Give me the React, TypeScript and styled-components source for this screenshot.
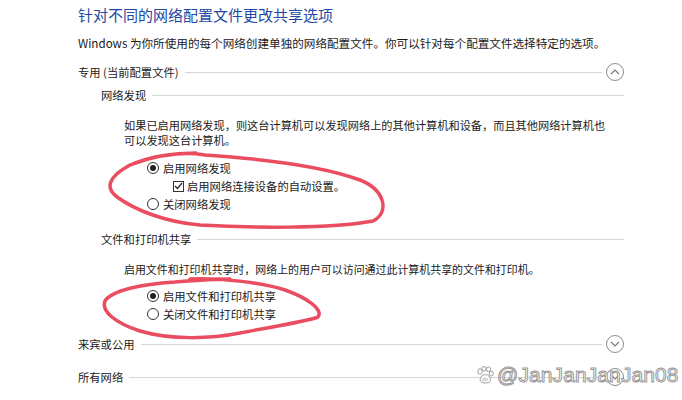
import styled, { createGlobalStyle } from 'styled-components';

const GlobalStyle = createGlobalStyle`
  html, body {
    margin: 0;
    padding: 0;
    background: #ffffff;
  }
  body {
    font-family: "Noto Sans CJK SC", "Noto Sans", sans-serif;
    color: #1a1a1a;
  }
`;

const Page = styled.div`
  position: relative;
  width: 682px;
  height: 400px;
  overflow: hidden;
  box-sizing: border-box;
  padding: 5px 0 0 78px;
`;

const Content = styled.div`
  width: 546px;
  display: flex;
  flex-direction: column;
`;

const Title = styled.h1`
  margin: 0;
  font-size: 15px;
  font-weight: normal;
  line-height: 20px;
  color: #2347a3;
`;

const Subtitle = styled.p`
  margin: 10px 0 0;
  font-size: 11.6px;
  line-height: 16px;
`;

const HeaderRow = styled.div<{ $top: number; $indent?: number }>`
  display: flex;
  align-items: center;
  height: ${(p) => (p.$indent ? 16 : 20)}px;
  margin-top: ${(p) => p.$top}px;
  margin-left: ${(p) => p.$indent ?? 0}px;
  font-size: 11.3px;
  white-space: nowrap;
`;

const Rule = styled.span<{ $gap?: number }>`
  flex: 1;
  height: 1px;
  margin-left: 6px;
  margin-right: ${(p) => p.$gap ?? 0}px;
  background: #d6d6d6;
`;

const ChevronButton = styled.button`
  width: 18px;
  height: 18px;
  padding: 0;
  border: 1px solid #8c8c8c;
  border-radius: 50%;
  background: #ffffff;
  display: flex;
  align-items: center;
  justify-content: center;
  box-sizing: border-box;
`;

const Paragraph = styled.p<{ $top: number; $size?: number }>`
  margin: ${(p) => p.$top}px 0 0 46px;
  width: 492px;
  font-size: ${(p) => p.$size ?? 11.2}px;
  line-height: 15px;
`;

const Options = styled.div<{ $top: number }>`
  display: flex;
  flex-direction: column;
  margin: ${(p) => p.$top}px 0 0 69px;
`;

const OptionRow = styled.label<{ $indent?: number }>`
  display: flex;
  align-items: center;
  height: 18px;
  margin-left: ${(p) => p.$indent ?? 0}px;
  font-size: 11.3px;
  gap: 4px;
`;

const Radio = styled.span<{ $on?: boolean }>`
  width: 12px;
  height: 12px;
  border: 1px solid #333333;
  border-radius: 50%;
  box-sizing: border-box;
  display: flex;
  align-items: center;
  justify-content: center;
  background: #ffffff;

  &::after {
    content: '';
    width: 6px;
    height: 6px;
    border-radius: 50%;
    background: ${(p) => (p.$on ? '#222222' : 'transparent')};
  }
`;

const Check = styled.span`
  width: 11px;
  height: 11px;
  border: 1px solid #333333;
  box-sizing: border-box;
  display: flex;
  align-items: center;
  justify-content: center;
  margin-right: -1px;
`;

const Annotations = styled.svg`
  position: absolute;
  left: 0;
  top: 0;
  pointer-events: none;
`;

const Watermark = styled.div`
  position: absolute;
  left: 476px;
  top: 363px;
  display: flex;
  align-items: center;
  gap: 3px;
  font-family: "Liberation Sans", Arial, sans-serif;
  font-size: 21px;
  color: #ffffff;
  -webkit-text-stroke: 1px #9a9a9a;
  letter-spacing: 0.1px;
`;

const Chevron = ({ up }: { up?: boolean }) => (
  <ChevronButton>
    <svg width="10" height="6" viewBox="0 0 10 6">
      <polyline
        points={up ? '1,5 5,1 9,5' : '1,1 5,5 9,1'}
        fill="none"
        stroke="#7a7a7a"
        strokeWidth="1.2"
      />
    </svg>
  </ChevronButton>
);

const Paw = () => (
  <svg width="18" height="19" viewBox="0 0 18 19">
    <g fill="#ffffff" stroke="#9a9a9a" strokeWidth="1">
      <ellipse cx="4" cy="5.5" rx="2.2" ry="2.8" />
      <ellipse cx="8" cy="2.8" rx="2.1" ry="2.3" />
      <ellipse cx="12.5" cy="3.3" rx="2.1" ry="2.4" />
      <ellipse cx="15.2" cy="7.6" rx="2" ry="2.4" />
      <path d="M4.5 15 C 3 13, 6 8.5, 9.5 8.5 C 13 8.5, 15.5 13, 14 15.5 C 12.5 17.5, 6.5 17.5, 4.5 15 Z" />
    </g>
    <text x="6.2" y="15.2" fontSize="5" fill="#9a9a9a" stroke="none" fontFamily="Liberation Sans, sans-serif">du</text>
  </svg>
);

const App = () => {
  return (
    <Page>
      <GlobalStyle />
      <Content>
        <Title>针对不同的网络配置文件更改共享选项</Title>
        <Subtitle>Windows 为你所使用的每个网络创建单独的网络配置文件。你可以针对每个配置文件选择特定的选项。</Subtitle>

        <HeaderRow $top={11}>
          专用 (当前配置文件)
          <Rule $gap={4} />
          <Chevron up />
        </HeaderRow>

        <HeaderRow $top={5} $indent={23}>
          网络发现
          <Rule />
        </HeaderRow>
        <Paragraph $top={15}>
          如果已启用网络发现，则这台计算机可以发现网络上的其他计算机和设备，而且其他网络计算机也可以发现这台计算机。
        </Paragraph>
        <Options $top={11}>
          <OptionRow>
            <Radio $on />
            启用网络发现
          </OptionRow>
          <OptionRow $indent={26}>
            <Check>
              <svg width="9" height="8" viewBox="0 0 9 8">
                <polyline points="1,4 3.5,6.5 8,1" fill="none" stroke="#222" strokeWidth="1.2" />
              </svg>
            </Check>
            启用网络连接设备的自动设置。
          </OptionRow>
          <OptionRow>
            <Radio />
            关闭网络发现
          </OptionRow>
        </Options>

        <HeaderRow $top={18} $indent={23}>
          文件和打印机共享
          <Rule />
        </HeaderRow>
        <Paragraph $top={15} $size={10.95}>
          启用文件和打印机共享时，网络上的用户可以访问通过此计算机共享的文件和打印机。
        </Paragraph>
        <Options $top={10}>
          <OptionRow>
            <Radio $on />
            启用文件和打印机共享
          </OptionRow>
          <OptionRow>
            <Radio />
            关闭文件和打印机共享
          </OptionRow>
        </Options>

        <HeaderRow $top={11}>
          来宾或公用
          <Rule $gap={4} />
          <Chevron />
        </HeaderRow>
        <HeaderRow $top={13}>
          所有网络
          <Rule $gap={4} />
          <Chevron />
        </HeaderRow>
      </Content>

      <Annotations width="682" height="400" viewBox="0 0 682 400">
        <g fill="none" stroke="#ea4c60" strokeWidth="3.5" strokeLinecap="round" strokeLinejoin="round">
          <path d="M128 166 C 150 156, 180 151, 205 155 C 250 158, 320 165, 360 180 C 385 190, 390 212, 373 221 C 330 229, 250 228, 200 225 C 165 222, 135 210, 117 197 C 105 188, 108 177, 130 165 C 150 157, 175 153, 196 153" />
          <path d="M190 279 C 220 278, 260 282, 285 290 C 305 297, 324 309, 318 317 C 305 322, 270 327, 240 333 C 210 339, 170 340, 140 331 C 115 323, 101 311, 105 301 C 111 291, 140 284, 175 282 C 200 280, 215 279, 230 279" />
        </g>
      </Annotations>

      <Watermark>
        <Paw />
        <span>@JanJanJanJan08</span>
      </Watermark>
    </Page>
  );
};

export default App;
